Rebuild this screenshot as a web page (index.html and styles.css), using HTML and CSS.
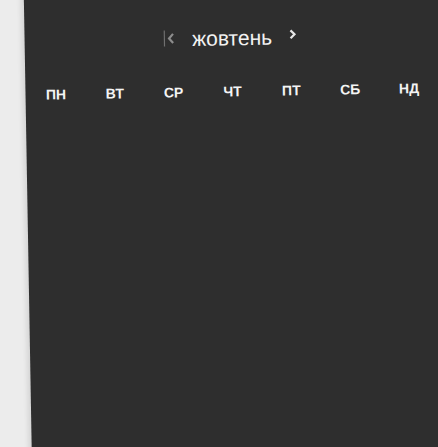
FILE: index.html
```html
<!DOCTYPE html>
<html lang="uk">
<head>
<meta charset="utf-8">
<link rel="stylesheet" href="styles.css">
</head>
<body>
<div class="panel">
  <div class="header">
    <button class="nav prev" aria-label="попередній">
      <svg width="13" height="18" viewBox="0 0 13 18"><rect x="0" y="1" width="1.4" height="16" fill="#707070"/><path d="M9.5 4.5 L5.5 9 L9.5 13.5" fill="none" stroke="#8c8c8c" stroke-width="2.2"/></svg>
    </button>
    <div class="title">жовтень</div>
    <button class="nav next" aria-label="наступний">
      <svg width="9" height="18" viewBox="0 0 9 18"><path d="M2 5 L6 9 L2 13" fill="none" stroke="#e6e6e6" stroke-width="2.2"/></svg>
    </button>
  </div>
  <div class="days">
    <div class="day">пн</div>
    <div class="day">вт</div>
    <div class="day">ср</div>
    <div class="day">чт</div>
    <div class="day">пт</div>
    <div class="day">сб</div>
    <div class="day">нд</div>
  </div>
</div>
</body>
</html>
```
FILE: styles.css
```css
html, body {
  margin: 0;
  padding: 0;
  background: #ececec;
  overflow: hidden;
  height: 100%;
}
body {
  font-family: "Liberation Sans", Arial, sans-serif;
}
.panel {
  margin-top: -50px;
  margin-left: 23px;
  width: 470px;
  height: 620px;
  background: #2e2e2e;
  transform-origin: 0 0;
  transform: rotate(-1deg);
  box-shadow: -3px 0 5px rgba(0,0,0,0.1);
}
.header {
  padding-top: 72px;
  width: 412px;
  height: 40px;
  display: flex;
  align-items: center;
  justify-content: center;
}
.nav {
  background: none;
  border: 0;
  padding: 0;
  display: flex;
  align-items: center;
}
.prev { margin-right: 15px; margin-top: -2px; }
.next { margin-left: 16px; margin-top: -6px; }
.title {
  color: #f2f2f2;
  font-size: 21px;
  line-height: 40px;
}
.days {
  margin-top: 23px;
  margin-left: 1px;
  width: 412px;
  display: grid;
  grid-template-columns: repeat(7, 1fr);
}
.day {
  text-align: center;
  color: #f4f4f4;
  font-weight: bold;
  font-size: 14px;
  line-height: 20px;
  text-transform: uppercase;
}
```
